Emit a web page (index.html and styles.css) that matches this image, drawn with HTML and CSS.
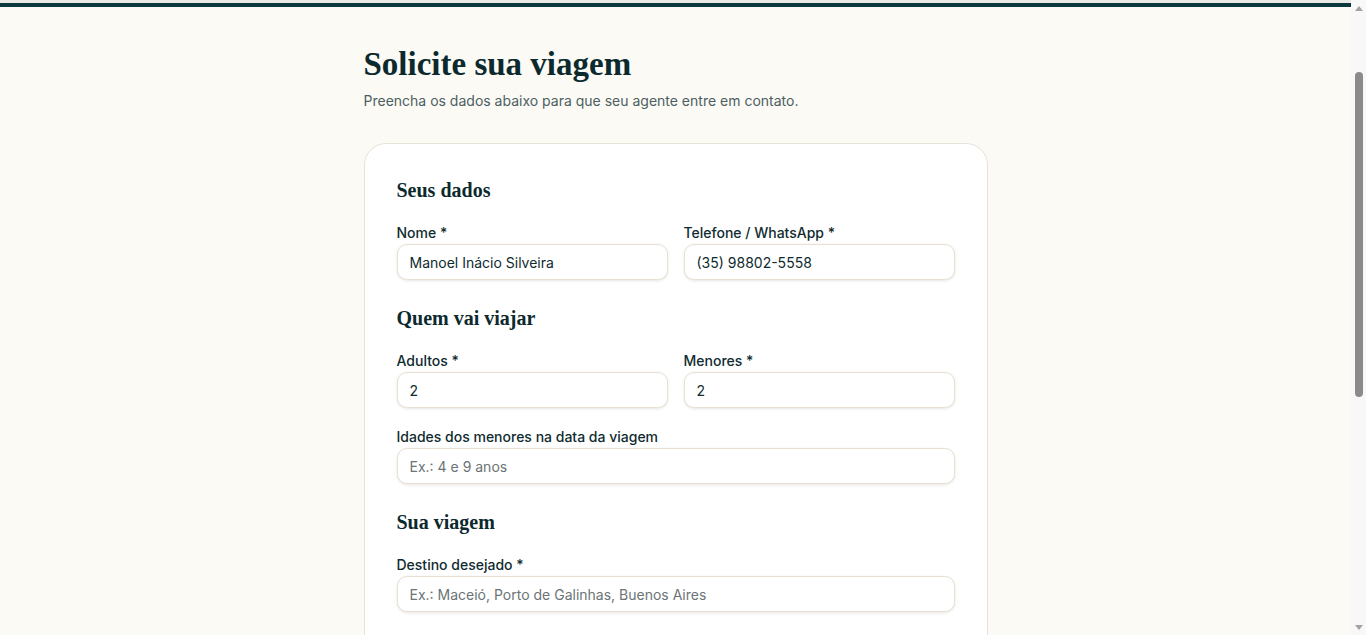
FILE: index.html
```html
<!DOCTYPE html>
<html lang="pt-BR">
<head>
    <meta charset="UTF-8">
    <title>Solicite sua viagem</title>
    <link rel="stylesheet" href="styles.css">
</head>
<body>

<div class="viewport">
    <div class="topbar"></div>

    <main class="page">
        <h1>Solicite sua viagem</h1>
        <p class="intro">Preencha os dados abaixo para que seu agente entre em contato.</p>

        <form class="card">
            <h2>Seus dados</h2>
            <div class="row">
                <div class="field">
                    <label for="nome">Nome *</label>
                    <input id="nome" type="text" value="Manoel Inácio Silveira">
                </div>
                <div class="field">
                    <label for="tel">Telefone / WhatsApp *</label>
                    <input id="tel" type="text" value="(35) 98802-5558">
                </div>
            </div>

            <h2>Quem vai viajar</h2>
            <div class="row">
                <div class="field">
                    <label for="adultos">Adultos *</label>
                    <input id="adultos" type="text" value="2">
                </div>
                <div class="field">
                    <label for="menores">Menores *</label>
                    <input id="menores" type="text" value="2">
                </div>
            </div>
            <div class="field">
                <label for="idades">Idades dos menores na data da viagem</label>
                <input id="idades" type="text" placeholder="Ex.: 4 e 9 anos">
            </div>

            <h2>Sua viagem</h2>
            <div class="field">
                <label for="destino">Destino desejado *</label>
                <input id="destino" type="text" placeholder="Ex.: Maceió, Porto de Galinhas, Buenos Aires">
            </div>
        </form>
    </main>
</div>

<!-- static scrollbar, as in the screenshot -->
<div class="scrollbar">
    <span class="arrow up"></span>
    <div class="track"><div class="thumb"></div></div>
    <span class="arrow down"></span>
</div>

</body>
</html>
```

FILE: styles.css
```css
html {
    scrollbar-width: none;
}
body {
    margin: 0;
    background: #fbfaf5;
    font-family: Inter, "Noto Sans", sans-serif;
    color: #0f2b2f;
}
.viewport {
    margin-right: 15px;
}
.topbar {
    height: 4px;
    background: #0b383c;
    border-top: 3px solid #e9e9e6;
}
.page {
    width: 624px;
    margin: 0 auto;
    padding: 35px 0 0;
}
h1 {
    font-family: "Liberation Serif", serif;
    font-size: 33px;
    font-weight: bold;
    line-height: 44px;
    margin: 0;
    color: #0c2a2e;
}
.intro {
    font-size: 14px;
    line-height: 20px;
    color: #4d5f62;
    margin: 5px 0 32px;
}
.card {
    background: #ffffff;
    border: 1px solid #e8e3d7;
    border-radius: 22px;
    padding: 32px 32px 120px;
}
h2 {
    font-family: "Liberation Serif", serif;
    font-size: 20px;
    font-weight: bold;
    line-height: 28px;
    margin: 0 0 19px;
    color: #0c2a2e;
}
.row + h2,
.field + h2 {
    margin-top: 24px;
}
.row {
    display: grid;
    grid-template-columns: 1fr 1fr;
    gap: 16px;
}
.row + .field {
    margin-top: 19px;
}
.field label {
    display: block;
    font-size: 14px;
    font-weight: 500;
    line-height: 20px;
    margin-bottom: 1px;
    color: #0f2b2f;
}
.field input {
    box-sizing: border-box;
    width: 100%;
    height: 36px;
    padding: 0 12px;
    font-family: inherit;
    font-size: 14px;
    color: #0f2b2f;
    background: #ffffff;
    border: 1px solid #e8e1d2;
    border-radius: 10px;
    box-shadow: 0 1px 3px rgba(60, 50, 30, 0.12);
    outline: none;
}
.field input::placeholder {
    color: #6b7476;
}
.scrollbar {
    position: fixed;
    top: 0;
    right: 0;
    bottom: 0;
    width: 15px;
    background: #f8f8f8;
    display: flex;
    flex-direction: column;
    align-items: center;
}
.arrow {
    width: 0;
    height: 0;
    border-left: 4px solid transparent;
    border-right: 4px solid transparent;
}
.arrow.up {
    margin-top: 6px;
    border-bottom: 5px solid #a3a3a3;
}
.arrow.down {
    margin-bottom: 5px;
    border-top: 5px solid #a3a3a3;
}
.track {
    flex: 1;
    width: 100%;
    display: flex;
    justify-content: center;
}
.thumb {
    width: 8px;
    height: 325px;
    margin-top: 61px;
    background: #8b8b8b;
    border-radius: 4px;
}
```
